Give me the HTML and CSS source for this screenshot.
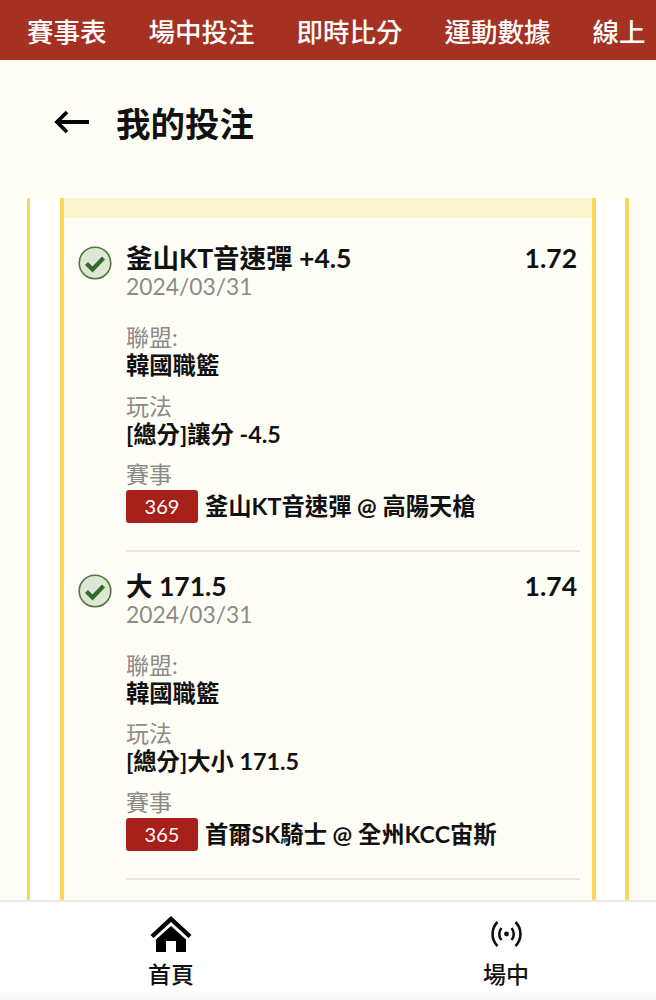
FILE: index.html
```html
<!DOCTYPE html>
<html>
  <head>
    <meta charset="UTF-8">
    <title>我的投注</title>
    <link rel="stylesheet" href="styles.css">
  </head>
  <body>
    <div class="page">
      <nav class="topnav">
        <a>賽事表</a>
        <a>場中投注</a>
        <a>即時比分</a>
        <a>運動數據</a>
        <a>線上</a>
      </nav>

      <div class="page-title">
        <svg class="back" viewBox="0 0 36 24" width="36" height="24">
          <path d="M35 12H3M13 2L3 12l10 10" fill="none" stroke="#000" stroke-width="3.8"/>
        </svg>
        <h1>我的投注</h1>
      </div>

      <main class="outer">
        <div class="inner">
          <div class="strip"></div>

          <section class="bet">
            <svg class="check" viewBox="0 0 34 34" width="34" height="34">
              <circle cx="17" cy="17" r="15.8" fill="#dfe6d6" stroke="#4c7a3c" stroke-width="1.6"/>
              <path d="M8.500 17.500l6 6 11-11.500" fill="none" stroke="#2f6b2a" stroke-width="4.200"/>
            </svg>
            <div class="bet-body">
              <div class="bet-head">
                <div class="bet-name">釜山KT音速彈 +4.5</div>
                <div class="bet-odds">1.72</div>
              </div>
              <div class="bet-date">2024/03/31</div>
              <div class="label first">聯盟:</div>
              <div class="value">韓國職籃</div>
              <div class="label">玩法</div>
              <div class="value">[總分]讓分 -4.5</div>
              <div class="label">賽事</div>
              <div class="match">
                <span class="badge">369</span>
                <span class="value">釜山KT音速彈 @ 高陽天槍</span>
              </div>
            </div>
          </section>

          <section class="bet">
            <svg class="check" viewBox="0 0 34 34" width="34" height="34">
              <circle cx="17" cy="17" r="15.8" fill="#dfe6d6" stroke="#4c7a3c" stroke-width="1.6"/>
              <path d="M8.500 17.500l6 6 11-11.500" fill="none" stroke="#2f6b2a" stroke-width="4.200"/>
            </svg>
            <div class="bet-body">
              <div class="bet-head">
                <div class="bet-name">大 171.5</div>
                <div class="bet-odds">1.74</div>
              </div>
              <div class="bet-date">2024/03/31</div>
              <div class="label first">聯盟:</div>
              <div class="value">韓國職籃</div>
              <div class="label">玩法</div>
              <div class="value">[總分]大小 171.5</div>
              <div class="label">賽事</div>
              <div class="match">
                <span class="badge">365</span>
                <span class="value">首爾SK騎士 @ 全州KCC宙斯</span>
              </div>
            </div>
          </section>
        </div>
      </main>

      <footer class="tabbar">
        <a class="tab">
          <svg viewBox="0 0 42 38" width="42" height="38">
            <path d="M21 1L0.500 20l3 3L21 7l17.500 16 3-3z" fill="#000"/>
            <path d="M21 11L6 24.500V37h10V26h10v11h10V24.500z" fill="#000"/>
          </svg>
          <span>首頁</span>
        </a>
        <a class="tab">
          <svg viewBox="0 0 31 38" width="31" height="38">
            <circle cx="15.500" cy="19" r="2.400" fill="#111"/>
            <path d="M10.500 13a9 9 0 0 0 0 12M20.500 13a9 9 0 0 1 0 12M6.500 7a17 17 0 0 0 0 24M24.500 7a17 17 0 0 1 0 24" fill="none" stroke="#111" stroke-width="2.600"/>
          </svg>
          <span>場中</span>
        </a>
      </footer>
    </div>
  </body>
</html>
```

FILE: styles.css
```css
* {
  box-sizing: border-box;
}
html,
body {
  margin: 0;
  padding: 0;
}
body {
  font-family: Lato, "Noto Sans CJK TC", sans-serif;
  background-color: #fffef6;
  color: #111;
}
.page {
  display: flex;
  flex-direction: column;
  height: 1000px;
  overflow: hidden;
}

/* top menu */
.topnav {
  display: flex;
  flex: none;
  gap: 42px;
  height: 60px;
  padding-left: 27px;
  align-items: center;
  overflow: hidden;
  background-color: #a53122;
  color: #fff;
  font-size: 26.500px;
  font-weight: 500;
  white-space: nowrap;
}
.topnav a {
  flex: none;
}

/* title */
.page-title {
  display: flex;
  flex: none;
  align-items: center;
  gap: 26px;
  height: 138px;
  padding: 0 0 15px 54px;
}
.back {
  flex: none;
}
.page-title h1 {
  margin: 0;
  font-size: 34.500px;
  font-weight: 700;
  color: #111;
}

/* card list */
.outer {
  flex: 1;
  min-height: 0;
  margin: 0 27px;
  padding: 0 29px 0 30px;
  overflow: hidden;
  background-color: #fff;
  border-left: 3px solid #f7d858;
  border-right: 4px solid #f7d858;
}
.inner {
  height: 100%;
  background-color: #fffef6;
  border-left: 4px solid #f7d858;
  border-right: 4px solid #f7d858;
}
.strip {
  height: 20px;
  margin-bottom: 26px;
  background-color: #fcf3d0;
}
.bet {
  display: flex;
  gap: 14px;
  margin: 0 12px 0 14px;
}
.check {
  flex: none;
  margin-top: 2px;
}
.bet-body {
  flex: 1;
  min-width: 0;
  padding-bottom: 27px;
  margin-bottom: 19.500px;
  border-bottom: 2px solid #e9e8e0;
}
.bet-head {
  display: flex;
  justify-content: space-between;
  align-items: center;
  height: 29px;
  padding-right: 3px;
}
.bet-name,
.bet-odds {
  font-size: 26.500px;
  font-weight: 700;
  line-height: 29px;
}
.bet-date {
  font-size: 22.800px;
  line-height: 27px;
  color: #8b8b88;
}
.label {
  margin-top: 11.500px;
  font-size: 23px;
  line-height: 28px;
  color: #8b8b88;
}
.label.first {
  margin-top: 23px;
}
.value {
  font-size: 23.300px;
  font-weight: 700;
  line-height: 29px;
}
.match {
  display: flex;
  align-items: center;
  gap: 7px;
  margin-top: 2px;
}
.badge {
  flex: none;
  width: 72px;
  height: 33px;
  border-radius: 3px;
  background-color: #a8201a;
  color: #fff;
  font-size: 20px;
  line-height: 33px;
  text-align: center;
}

/* bottom tabs */
.tabbar {
  display: flex;
  flex: none;
  gap: 235px;
  height: 100px;
  padding-left: 121px;
  background: linear-gradient(#fff 90%, #f6f6f6);
  border-top: 2px solid #e8e8e6;
}
.tab {
  display: flex;
  flex-direction: column;
  align-items: center;
  width: 100px;
  padding-top: 13px;
  font-size: 23px;
  font-weight: 500;
  line-height: 30px;
  color: #111;
}
.tab span {
  margin-top: 6px;
}
```
